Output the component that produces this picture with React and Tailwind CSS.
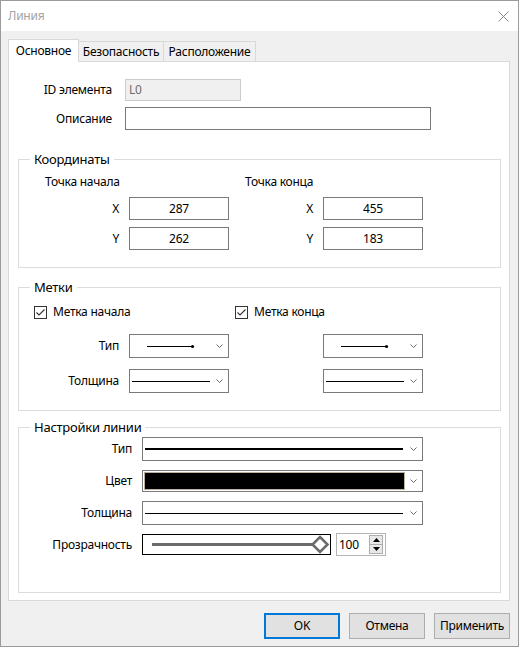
import React from 'react';

// маленькая стрелка выпадающего списка
function Chevron() {
  return (
    <span className="w-[17px] flex justify-center items-center">
      <svg width="7" height="4" viewBox="0 0 7 4">
        <polyline points="0.5,0.5 3.5,3.5 6.5,0.5" fill="none" stroke="#6b6b6b" strokeWidth="1" />
      </svg>
    </span>
  );
}

function Combo({ className = '', children }) {
  return (
    <div className={`flex items-center border border-[#7a7a7a] bg-white ${className}`}>
      <div className="flex-1 flex items-center h-full">{children}</div>
      <Chevron />
    </div>
  );
}

// линия со стрелкой-точкой на конце
function ArrowLine() {
  return (
    <svg width="48" height="5" className="ml-[17px]">
      <line x1="0" y1="2.5" x2="45" y2="2.5" stroke="#000" strokeWidth="1" />
      <circle cx="45.5" cy="2.5" r="1.6" fill="#000" />
    </svg>
  );
}

function ThinLine() {
  return <span className="ml-[2px] w-[78px] h-px bg-black" />;
}

function CheckBox({ label }) {
  return (
    <label className="flex items-center gap-[6px]">
      <svg width="13" height="13" viewBox="0 0 13 13">
        <rect x="0.5" y="0.5" width="12" height="12" fill="#fff" stroke="#333" />
        <polyline points="2.5,6.5 5,9 10.5,3.5" fill="none" stroke="#333" strokeWidth="1.1" />
      </svg>
      <span>{label}</span>
    </label>
  );
}

function Input({ value }) {
  return (
    <div className="ml-[10px] w-[100px] h-[23px] border border-[#7a7a7a] bg-white flex items-center justify-center">
      {value}
    </div>
  );
}

function Group({ title, className = '', children }) {
  return (
    <fieldset className={`ml-[9px] w-[483px] border border-[#dcdcdc] ${className}`}>
      <legend className="ml-[11px] px-[4px] text-[13px] leading-[16px]">{title}</legend>
      {children}
    </fieldset>
  );
}

export default function App() {
  return (
    <div className="w-[519px] h-[647px] border border-[#9b9b9b] bg-[#f0f0f0] flex flex-col font-['Noto_Sans',sans-serif] text-[12px] leading-[16px] tracking-[-0.25px] text-black">
      {/* заголовок окна */}
      <div className="h-[30px] bg-white flex items-center justify-between pl-[7px] pr-[9px]">
        <span className="text-[#a3a3a3]">Линия</span>
        <svg width="11" height="11" viewBox="0 0 11 11">
          <path d="M0.5 0.5 L10.5 10.5 M10.5 0.5 L0.5 10.5" stroke="#8a8a8a" strokeWidth="1" />
        </svg>
      </div>

      {/* вкладки */}
      <div className="pt-[8px] pl-[7px]">
        <div className="flex items-end h-[22px]">
          <div className="relative z-10 -mb-px h-[23px] w-[71px] bg-white border border-b-0 border-[#d9d9d9] flex items-center justify-center">
            Основное
          </div>
          <div className="h-[20px] w-[85px] border-t border-r border-[#d9d9d9] flex items-center justify-center">
            Безопасность
          </div>
          <div className="h-[20px] w-[92px] border-t border-r border-[#d9d9d9] flex items-center justify-center">
            Расположение
          </div>
        </div>

        <div className="w-[502px] h-[540px] border border-[#d9d9d9] bg-white flex flex-col">
          <div className="mt-[17px] flex items-center">
            <span className="w-[103px] text-right">ID элемента</span>
            <div className="ml-[13px] w-[116px] h-[22px] bg-[#f0f0f0] border border-[#cccccc] flex items-center pl-[3px] text-[#6d6d6d]">
              L0
            </div>
          </div>
          <div className="mt-[6px] flex items-center">
            <span className="w-[103px] text-right">Описание</span>
            <div className="ml-[13px] w-[306px] h-[23px] bg-white border border-[#7a7a7a]" />
          </div>

          <Group title="Координаты" className="mt-[21px] pb-[17px]">
            <div className="mt-[7px] flex">
              <span className="ml-[26px] w-[200px]">Точка начала</span>
              <span>Точка конца</span>
            </div>
            <div className="mt-[7px] flex items-center">
              <span className="w-[100px] text-right">X</span>
              <Input value="287" />
              <span className="w-[84px] text-right">X</span>
              <Input value="455" />
            </div>
            <div className="mt-[7px] flex items-center">
              <span className="w-[100px] text-right">Y</span>
              <Input value="262" />
              <span className="w-[84px] text-right">Y</span>
              <Input value="183" />
            </div>
          </Group>

          <Group title="Метки" className="mt-[11px] pb-[17px]">
            <div className="mt-[9px] flex">
              <div className="ml-[15px] w-[201px]">
                <CheckBox label="Метка начала" />
              </div>
              <CheckBox label="Метка конца" />
            </div>
            <div className="mt-[14px] flex items-center">
              <span className="w-[100px] text-right">Тип</span>
              <Combo className="ml-[10px] w-[100px] h-[24px]">
                <ArrowLine />
              </Combo>
              <span className="w-[84px]" />
              <Combo className="ml-[10px] w-[100px] h-[24px]">
                <ArrowLine />
              </Combo>
            </div>
            <div className="mt-[11px] flex items-center">
              <span className="w-[100px] text-right">Толщина</span>
              <Combo className="ml-[10px] w-[100px] h-[24px]">
                <ThinLine />
              </Combo>
              <span className="w-[84px]" />
              <Combo className="ml-[10px] w-[100px] h-[24px]">
                <ThinLine />
              </Combo>
            </div>
          </Group>

          <Group title="Настройки линии" className="mt-[8px] pb-[36px]">
            <div className="mt-[2px] flex items-center">
              <span className="w-[113px] text-right">Тип</span>
              <Combo className="ml-[10px] w-[281px] h-[24px]">
                <span className="ml-[2px] w-[258px] h-[2px] bg-black" />
              </Combo>
            </div>
            <div className="mt-[9px] flex items-center">
              <span className="w-[113px] text-right">Цвет</span>
              <Combo className="ml-[10px] w-[281px] h-[22px]">
                <span className="ml-px w-[261px] h-[18px] bg-black border border-[#b8b1a0]" />
              </Combo>
            </div>
            <div className="mt-[9px] flex items-center">
              <span className="w-[113px] text-right">Толщина</span>
              <Combo className="ml-[10px] w-[281px] h-[24px]">
                <span className="ml-[2px] w-[258px] h-px bg-black" />
              </Combo>
            </div>
            <div className="mt-[8px] flex items-center">
              <span className="w-[113px] text-right">Прозрачность</span>
              <div className="ml-[10px] w-[189px] h-[21px] border border-black bg-white">
                <svg width="187" height="19" viewBox="0 0 187 19">
                  <line x1="9" y1="9.5" x2="177" y2="9.5" stroke="#6b6b6b" strokeWidth="3" />
                  <polygon points="177,2 184.5,9.5 177,17 169.5,9.5" fill="#fff" stroke="#6b6b6b" strokeWidth="2.5" />
                </svg>
              </div>
              <div className="ml-[5px] w-[50px] h-[23px] border border-[#b4b4b4] bg-white flex items-center justify-between pl-[2px] pr-[2px]">
                <span>100</span>
                <div className="flex flex-col">
                  <span className="w-[14px] h-[10px] bg-[#e8e8e8] border border-[#adadad] flex items-center justify-center">
                    <svg width="7" height="4" viewBox="0 0 7 4"><polygon points="3.5,0 7,4 0,4" fill="#000" /></svg>
                  </span>
                  <span className="w-[14px] h-[10px] -mt-px bg-[#e8e8e8] border border-[#adadad] flex items-center justify-center">
                    <svg width="7" height="4" viewBox="0 0 7 4"><polygon points="0,0 7,0 3.5,4" fill="#000" /></svg>
                  </span>
                </div>
              </div>
            </div>
          </Group>
        </div>
      </div>

      {/* кнопки */}
      <div className="mt-[12px] pr-[8px] flex justify-end gap-[9px]">
        <button className="w-[76px] h-[26px] bg-[#e1e1e1] border-2 border-[#0078d7]">OK</button>
        <button className="w-[76px] h-[26px] bg-[#e1e1e1] border border-[#adadad]">Отмена</button>
        <button className="w-[76px] h-[26px] bg-[#e1e1e1] border border-[#adadad]">Применить</button>
      </div>
    </div>
  );
}
